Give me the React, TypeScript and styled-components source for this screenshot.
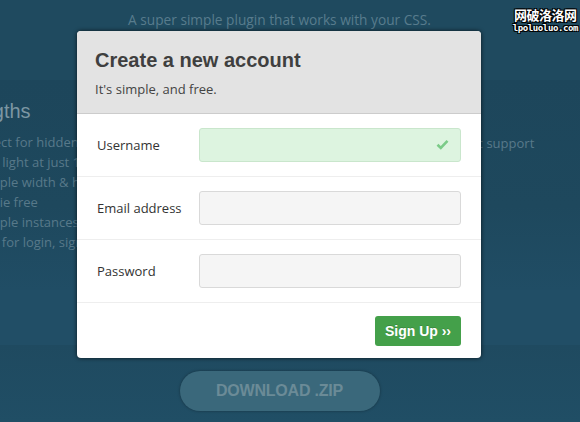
import React from 'react';
import styled, { createGlobalStyle } from 'styled-components';

const GlobalStyle = createGlobalStyle`
  html, body {
    margin: 0;
    padding: 0;
    background: #1f4a5f;
  }
  * {
    box-sizing: border-box;
  }
`;

const leftFeatures = [
  'Perfect for hidden content',
  'Ultra light at just 1kb',
  'Multiple width & height',
  'Cookie free',
  'Multiple instances',
  'Ideal for login, signup & more',
];

const fields = [
  { label: 'Username', valid: true },
  { label: 'Email address', valid: false },
  { label: 'Password', valid: false },
];

const App = () => (
  <Page>
    <GlobalStyle />
    <Hero>
      <Tagline>A super simple plugin that works with your CSS.</Tagline>
    </Hero>
    <Features>
      <FeatureColumn>
        <Heading>Strengths</Heading>
        <FeatureList>
          {leftFeatures.map((f) => (
            <li key={f}>{f}</li>
          ))}
        </FeatureList>
      </FeatureColumn>
      <SideColumn>
        <FeatureList>
          <li>Automatic support</li>
        </FeatureList>
      </SideColumn>
    </Features>
    <Band />
    <Footer>
      <DownloadButton type="button">DOWNLOAD .ZIP</DownloadButton>
    </Footer>

    <Watermark>
      <span>网破洛洛网</span>
      <small>lpoluoluo.com</small>
    </Watermark>

    <Modal>
      <ModalHeader>
        <Title>Create a new account</Title>
        <Subtitle>It's simple, and free.</Subtitle>
      </ModalHeader>
      {fields.map((field) => (
        <FieldRow key={field.label}>
          <Label>{field.label}</Label>
          <InputWrap>
            <Input valid={field.valid} />
            {field.valid && (
              <Check width="13" height="11" viewBox="0 0 13 11">
                <path d="M1.5 5.8 L4.8 9 L11.5 1.8" fill="none" stroke="#7bcb88" strokeWidth="2.6" />
              </Check>
            )}
          </InputWrap>
        </FieldRow>
      ))}
      <ModalFooter>
        <SignUpButton type="button">Sign Up ››</SignUpButton>
      </ModalFooter>
    </Modal>
  </Page>
);

const Page = styled.div`
  position: relative;
  width: 580px;
  height: 422px;
  overflow: hidden;
  font-family: 'Open Sans', 'Liberation Sans', sans-serif;
`;

const Hero = styled.section`
  height: 80px;
  padding: 11px 21px 0 0;
  background: #1f4a5f;
  text-align: center;
`;

const Tagline = styled.p`
  margin: 0;
  font-size: 13.7px;
  line-height: 18px;
  color: #587c8d;
`;

const Features = styled.section`
  height: 210px;
  display: flex;
  background: linear-gradient(#1d465b, #1e485d 60%, #204d65);
`;

const FeatureColumn = styled.div`
  width: 300px;
  margin-left: -31px;
  padding-top: 19px;
`;

const SideColumn = styled.div`
  margin-left: 152px;
  padding-top: 53px;
`;

const Heading = styled.h2`
  margin: 0 0 9px -24px;
  font-family: 'Liberation Sans', Arial, sans-serif;
  font-weight: 400;
  font-size: 20px;
  line-height: 24px;
  color: #7c96a3;
`;

const FeatureList = styled.ul`
  margin: 0;
  padding: 0;
  list-style: none;
  font-size: 13px;
  line-height: 20px;
  color: #58798a;
  white-space: nowrap;
`;

const Band = styled.div`
  height: 55px;
  background: #214e66;
`;

const Footer = styled.section`
  height: 77px;
  padding: 26px 21px 0 0;
  display: flex;
  justify-content: center;
  background: linear-gradient(#1f4a60, #204e65);
`;

const DownloadButton = styled.button`
  width: 200px;
  height: 40px;
  border: 0;
  border-radius: 20px;
  background: #3a687b;
  box-shadow: 0 0 3px rgba(0, 0, 0, 0.35);
  font-family: 'Liberation Sans', Arial, sans-serif;
  font-weight: 700;
  font-size: 16px;
  color: #6b8b97;
  letter-spacing: -0.2px;
`;

const Watermark = styled.div`
  position: absolute;
  top: 8px;
  right: 2px;
  display: flex;
  flex-direction: column;
  align-items: center;
  color: #ffffff;
  text-shadow: -1px -1px 0 #000, 1px -1px 0 #000, -1px 1px 0 #000, 1px 1px 0 #000;
  line-height: 1;

  span {
    font-family: 'Noto Sans CJK SC', sans-serif;
    font-size: 13px;
    font-weight: 700;
    letter-spacing: -0.5px;
  }

  small {
    margin-top: 3px;
    font-family: 'DejaVu Sans Mono', monospace;
    font-size: 9px;
    font-weight: 700;
    letter-spacing: -0.4px;
  }
`;

const Modal = styled.div`
  position: absolute;
  top: 31px;
  left: 77px;
  width: 404px;
  background: #ffffff;
  border-radius: 4px;
  overflow: hidden;
  box-shadow: 0 0 4px rgba(0, 0, 0, 0.7);
`;

const ModalHeader = styled.div`
  height: 83px;
  padding: 17px 18px 0;
  background: #e3e3e3;
  border-bottom: 1px solid #cccccc;
`;

const Title = styled.h1`
  margin: 0;
  font-family: 'Liberation Sans', Arial, sans-serif;
  font-size: 20px;
  line-height: 24px;
  font-weight: 700;
  color: #3f3f3f;
`;

const Subtitle = styled.p`
  margin: 8px 0 0;
  font-size: 13px;
  line-height: 18px;
  color: #444444;
`;

const FieldRow = styled.div`
  height: 63px;
  display: flex;
  align-items: center;
  padding: 0 20px;
  border-bottom: 1px solid #eeeeee;
`;

const Label = styled.label`
  width: 102px;
  font-size: 13px;
  color: #333333;
`;

const InputWrap = styled.div`
  position: relative;
  flex: 1;
`;

const Input = styled.div<{ valid: boolean }>`
  height: 34px;
  border-radius: 3px;
  border: 1px solid ${({ valid }) => (valid ? '#c9e6cc' : '#d9d9d9')};
  background: ${({ valid }) => (valid ? '#ddf4e0' : '#f5f5f5')};
`;

const Check = styled.svg`
  position: absolute;
  top: 11px;
  right: 12px;
`;

const ModalFooter = styled.div`
  height: 55px;
  display: flex;
  justify-content: flex-end;
  align-items: center;
  padding: 1px 20px 0;
`;

const SignUpButton = styled.button`
  width: 86px;
  height: 30px;
  border: 0;
  border-radius: 3px;
  background: #44a04a;
  font-family: 'Liberation Sans', Arial, sans-serif;
  font-weight: 700;
  font-size: 14px;
  color: #ffffff;
  text-shadow: 0 -1px 0 rgba(0, 0, 0, 0.15);
`;

export default App;
